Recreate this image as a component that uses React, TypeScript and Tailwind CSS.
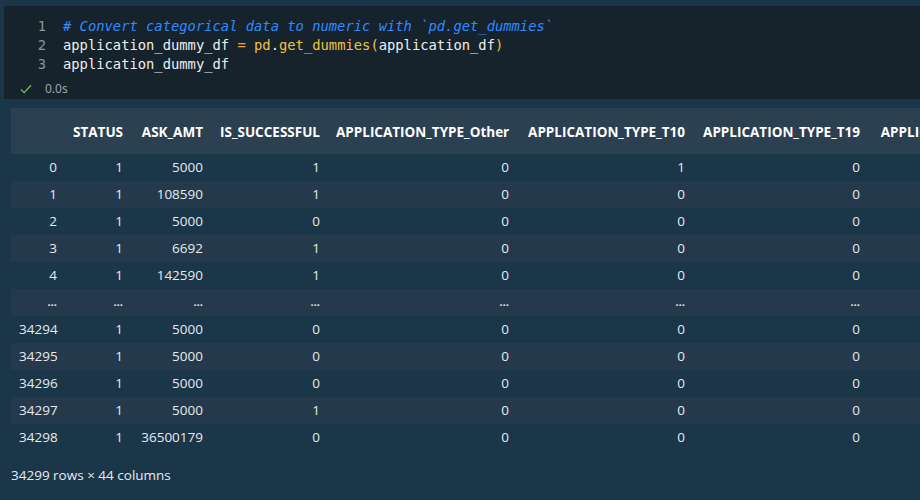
import React from 'react';

const cols = [
  { name: 'STATUS', w: 66 },
  { name: 'ASK_AMT', w: 80 },
  { name: 'IS_SUCCESSFUL', w: 117 },
  { name: 'APPLICATION_TYPE_Other', w: 189 },
  { name: 'APPLICATION_TYPE_T10', w: 176 },
  { name: 'APPLICATION_TYPE_T19', w: 175 },
  { name: 'APPLICATION_TYPE_T3', w: 170 },
];

const rows: string[][] = [
  ['0', '1', '5000', '1', '0', '1', '0', '1'],
  ['1', '1', '108590', '1', '0', '0', '0', '0'],
  ['2', '1', '5000', '0', '0', '0', '0', '0'],
  ['3', '1', '6692', '1', '0', '0', '0', '1'],
  ['4', '1', '142590', '1', '0', '0', '0', '0'],
  ['…', '…', '…', '…', '…', '…', '…', '…'],
  ['34294', '1', '5000', '0', '0', '0', '0', '0'],
  ['34295', '1', '5000', '0', '0', '0', '0', '1'],
  ['34296', '1', '5000', '0', '0', '0', '0', '0'],
  ['34297', '1', '5000', '1', '0', '0', '0', '0'],
  ['34298', '1', '36500179', '0', '0', '0', '0', '0'],
];

const CodeLine: React.FC<{ n: number; children: React.ReactNode }> = ({ n, children }) => (
  <div className="flex h-[19px] items-center">
    <span className="w-[42px] text-right text-[#8a949c]">{n}</span>
    <span className="ml-[17px] whitespace-pre">{children}</span>
  </div>
);

export default function App() {
  return (
    <div className="h-[500px] w-[920px] overflow-hidden bg-[#1b3549]">
      {/* code cell */}
      <div className="ml-[4px] mt-[6px] h-[93px] bg-[#16232d]">
        <div
          className="pt-[11px] text-[13.8px] text-[#eceff1]"
          style={{ fontFamily: '"DejaVu Sans Mono", "Liberation Mono", monospace' }}
        >
          <CodeLine n={1}>
            <span className="italic text-[#2f8bff]"># Convert categorical data to numeric with `pd.get_dummies`</span>
          </CodeLine>
          <CodeLine n={2}>
            application_dummy_df <span className="text-[#f2a12d]">=</span>{' '}
            <span className="text-[#f0c23c]">pd</span>.<span className="text-[#f0c23c]">get_dummies</span>
            <span className="text-[#f0c23c]">(</span>application_df<span className="text-[#f0c23c]">)</span>
          </CodeLine>
          <CodeLine n={3}>application_dummy_df</CodeLine>
        </div>
        <div
          className="mt-[6px] flex items-center text-[12px] text-[#9aa3aa]"
          style={{ fontFamily: '"Noto Sans", "Open Sans", sans-serif' }}
        >
          <svg width="12" height="10" viewBox="0 0 12 10" className="ml-[16px]">
            <path d="M1 5.5 L4.2 8.6 L11 1.2" fill="none" stroke="#6fbf5c" strokeWidth="1.3" />
          </svg>
          <span className="ml-[13px]">0.0s</span>
        </div>
      </div>

      {/* output */}
      <div
        className="ml-[11px] mt-[9px] overflow-hidden text-[13.5px] text-[#e6ebee]"
        style={{ fontFamily: '"Open Sans", "Noto Sans", sans-serif' }}
      >
        <table className="table-fixed border-collapse" style={{ width: 54 + cols.reduce((a, c) => a + c.w, 0) }}>
          <colgroup>
            <col style={{ width: 54 }} />
            {cols.map((c) => (
              <col key={c.name} style={{ width: c.w }} />
            ))}
          </colgroup>
          <thead>
            <tr className="h-[46px] bg-[#2b4051]">
              <th />
              {cols.map((c) => (
                <th key={c.name} className="whitespace-nowrap px-[8px] pt-[2px] text-right text-[13.5px] font-bold text-white">
                  {c.name}
                </th>
              ))}
            </tr>
          </thead>
          <tbody>
            {rows.map((r, i) => (
              <tr key={i} className={`h-[27px] ${i % 2 === 1 ? 'bg-[#243a4c]' : 'bg-[#1b3549]'}`}>
                {r.map((v, j) => (
                  <td
                    key={j}
                    className={`whitespace-nowrap px-[8px] text-right ${v === '…' ? 'text-[11px] font-bold' : ''}`}
                  >
                    {v}
                  </td>
                ))}
              </tr>
            ))}
          </tbody>
        </table>
        <div className="mt-[14px] text-[13.5px] text-[#e6ebee]">34299 rows × 44 columns</div>
      </div>
    </div>
  );
}
